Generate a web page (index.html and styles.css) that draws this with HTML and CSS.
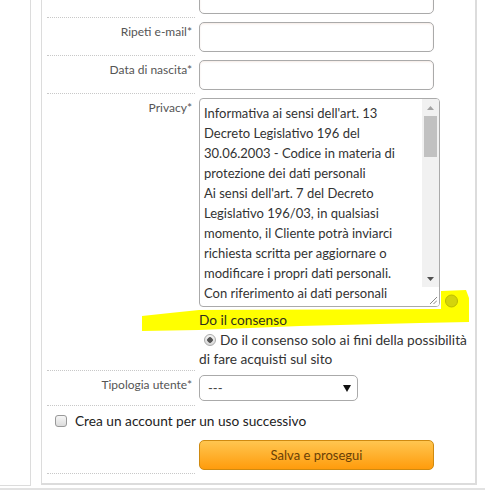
FILE: index.html
```html
<!DOCTYPE html>
<html lang="it">
<head>
<meta charset="utf-8">
<title>Dati cliente</title>
<link rel="stylesheet" href="styles.css">
</head>
<body>
<div class="page">
  <aside class="sidebar"></aside>
  <main class="box">
    <div class="row">
      <div class="label">E-mail*</div>
      <div class="field"><div class="input"></div></div>
    </div>
    <div class="row">
      <div class="label">Ripeti e-mail*</div>
      <div class="field"><div class="input"></div></div>
    </div>
    <div class="row">
      <div class="label">Data di nascita*</div>
      <div class="field"><div class="input"></div></div>
    </div>
    <div class="row row--privacy">
      <div class="label">Privacy*</div>
      <div class="field field--privacy">
        <div class="textarea">
          <div class="ta-text">Informativa ai sensi dell'art. 13<br>Decreto Legislativo 196 del<br>30.06.2003 - Codice in materia di<br>protezione dei dati personali<br>Ai sensi dell'art. 7 del Decreto<br>Legislativo 196/03, in qualsiasi<br>momento, il Cliente potrà inviarci<br>richiesta scritta per aggiornare o<br>modificare i propri dati personali.<br>Con riferimento ai dati personali<br>conferiti, il Cliente ha diritto di</div>
          <div class="ta-scroll">
            <span class="sb-btn"><svg width="7" height="4" viewBox="0 0 7 4"><polygon points="0,4 7,4 3.5,0" fill="#a3a3a3"/></svg></span>
            <span class="sb-thumb"></span>
            <span class="sb-space"></span>
            <span class="sb-btn"><svg width="7" height="4" viewBox="0 0 7 4"><polygon points="0,0 7,0 3.5,4" fill="#505050"/></svg></span>
            <span class="sb-resizer"><svg width="8" height="8" viewBox="0 0 8 8"><line x1="1" y1="8" x2="8" y2="1" stroke="#888" stroke-width="1"/><line x1="4.5" y1="8" x2="8" y2="4.5" stroke="#888" stroke-width="1"/></svg></span>
          </div>
        </div>
        <p class="consent-title">Do il consenso</p>
        <p class="consent-option"><span class="nowrap"><span class="radio"></span>Do il consenso solo ai fini della possibilità</span><br>di fare acquisti sul sito</p>
        <svg class="marker" width="330" height="44" viewBox="0 0 330 44"><polygon points="0,26 28,23 57,20 299,19 299,1 324,0 327,8 327,32 278,33 158,36 57,40 0,41" fill="#ffff00"/><circle cx="309.5" cy="11" r="6" fill="#d4d40c" stroke="#bcbc00" stroke-width="1"/></svg>
      </div>
    </div>
    <div class="row">
      <div class="label">Tipologia utente*</div>
      <div class="field field--select">
        <div class="select"><span>---</span><svg width="8" height="7" viewBox="0 0 8 7"><polygon points="0,0 8,0 4,7" fill="#111"/></svg></div>
      </div>
    </div>
    <div class="check-row"><span class="checkbox"></span>Crea un account per un uso successivo</div>
    <div class="row">
      <div class="label"></div>
      <div class="field field--button"><div class="button">Salva e prosegui</div></div>
    </div>
  </main>
</div>
<div class="footer-line"></div>
</body>
</html>
```
FILE: styles.css
```css
html, body {
  margin: 0;
  padding: 0;
  background: #fff;
}
body {
  font-family: Lato, "Open Sans", sans-serif;
  color: #333;
  overflow: hidden;
}
.page {
  display: flex;
  gap: 10px;
  margin-top: -20px;
}
.sidebar {
  width: 30px;
  flex: none;
  border-right: 1px solid #dcdcdc;
  border-bottom: 1px solid #dcdcdc;
}
.box {
  flex: 1;
  margin-right: 8px;
  margin-bottom: 1px;
  padding: 0 8px 9px 5px;
  border-left: 1px solid #dcdcdc;
  border-right: 2px solid #dcdcdc;
  border-bottom: 2px solid #dcdcdc;
  position: relative;
  z-index: 0;
}
.row {
  display: flex;
  gap: 4px;
}
.label {
  width: 148px;
  flex: none;
  box-sizing: border-box;
  border-bottom: 1px dotted #c8c8c8;
  text-align: right;
  padding: 6px 3px 0 0;
  font-size: 12px;
  line-height: 16px;
  color: #555;
}
.field {
  flex: 1;
  min-width: 0;
  padding: 4px 0 4px;
  position: relative;
}
.input {
  width: 235px;
  height: 30px;
  box-sizing: border-box;
  border: 1px solid #aaa;
  border-radius: 5px;
  box-shadow: inset 0 1px 2px rgba(200, 140, 110, 0.18);
  background: #fff;
}
.field--privacy {
  padding-bottom: 3px;
}
.textarea {
  width: 241px;
  height: 209px;
  box-sizing: border-box;
  border: 1px solid #aaa;
  border-radius: 4px;
  display: flex;
  overflow: hidden;
  background: #fff;
  margin-bottom: 3px;
}
.ta-text {
  flex: 1;
  padding: 4px 0 0 4px;
  font-size: 13px;
  line-height: 20px;
  color: #333;
  white-space: nowrap;
  overflow: hidden;
}
.ta-scroll {
  width: 17px;
  flex: none;
  background: #f1f1f1;
  display: flex;
  flex-direction: column;
}
.sb-btn {
  height: 17px;
  flex: none;
  display: flex;
  align-items: center;
  justify-content: center;
}
.sb-thumb {
  height: 41px;
  flex: none;
  margin: 0 2px;
  background: #c1c1c1;
}
.sb-space {
  flex: 1;
}
.sb-resizer {
  height: 17px;
  flex: none;
  background: #fff;
  display: flex;
  align-items: flex-end;
  justify-content: flex-end;
  padding: 0 2px 2px 0;
}
.consent-title {
  margin: 0;
  font-size: 13.7px;
  line-height: 20px;
  color: #2f2f1a;
}
.consent-option {
  margin: 0;
  font-size: 13.7px;
  line-height: 19px;
  color: #333;
}
.nowrap {
  white-space: nowrap;
}
.radio {
  display: inline-block;
  width: 12px;
  height: 12px;
  box-sizing: border-box;
  border: 1px solid #aaa;
  border-radius: 50%;
  background: radial-gradient(circle, #555 0 2.5px, transparent 3px), linear-gradient(#f4f4f4, #d8d8d8);
  margin: 0 4px 0 5px;
  vertical-align: -1px;
}
.marker {
  position: absolute;
  left: -57px;
  top: 196px;
  z-index: -1;
}
.field--select {
  padding-bottom: 5px;
}
.select {
  width: 159px;
  height: 26px;
  box-sizing: border-box;
  border: 1px solid #aaa;
  border-radius: 5px;
  display: flex;
  align-items: center;
  justify-content: space-between;
  padding: 0 6px 0 8px;
  font-size: 13px;
  color: #444;
}
.check-row {
  display: flex;
  align-items: center;
  padding: 6px 0 6px 8px;
  font-size: 13.7px;
  line-height: 17px;
  color: #222;
}
.checkbox {
  width: 12px;
  height: 12px;
  box-sizing: border-box;
  border: 1px solid #999;
  border-radius: 3px;
  background: linear-gradient(#f6f6f6, #dcdcdc);
  margin-right: 8px;
}
.field--button {
  padding: 5px 0 4px;
}
.button {
  width: 235px;
  height: 30px;
  box-sizing: border-box;
  border: 1px solid #cf8a10;
  border-radius: 5px;
  background: linear-gradient(#ffc650, #ff9c0c);
  display: flex;
  align-items: center;
  justify-content: center;
  font-size: 13px;
  color: #6a3f06;
}
.footer-line {
  height: 2px;
  margin-top: 2px;
  background: #e2e2e2;
}
```
